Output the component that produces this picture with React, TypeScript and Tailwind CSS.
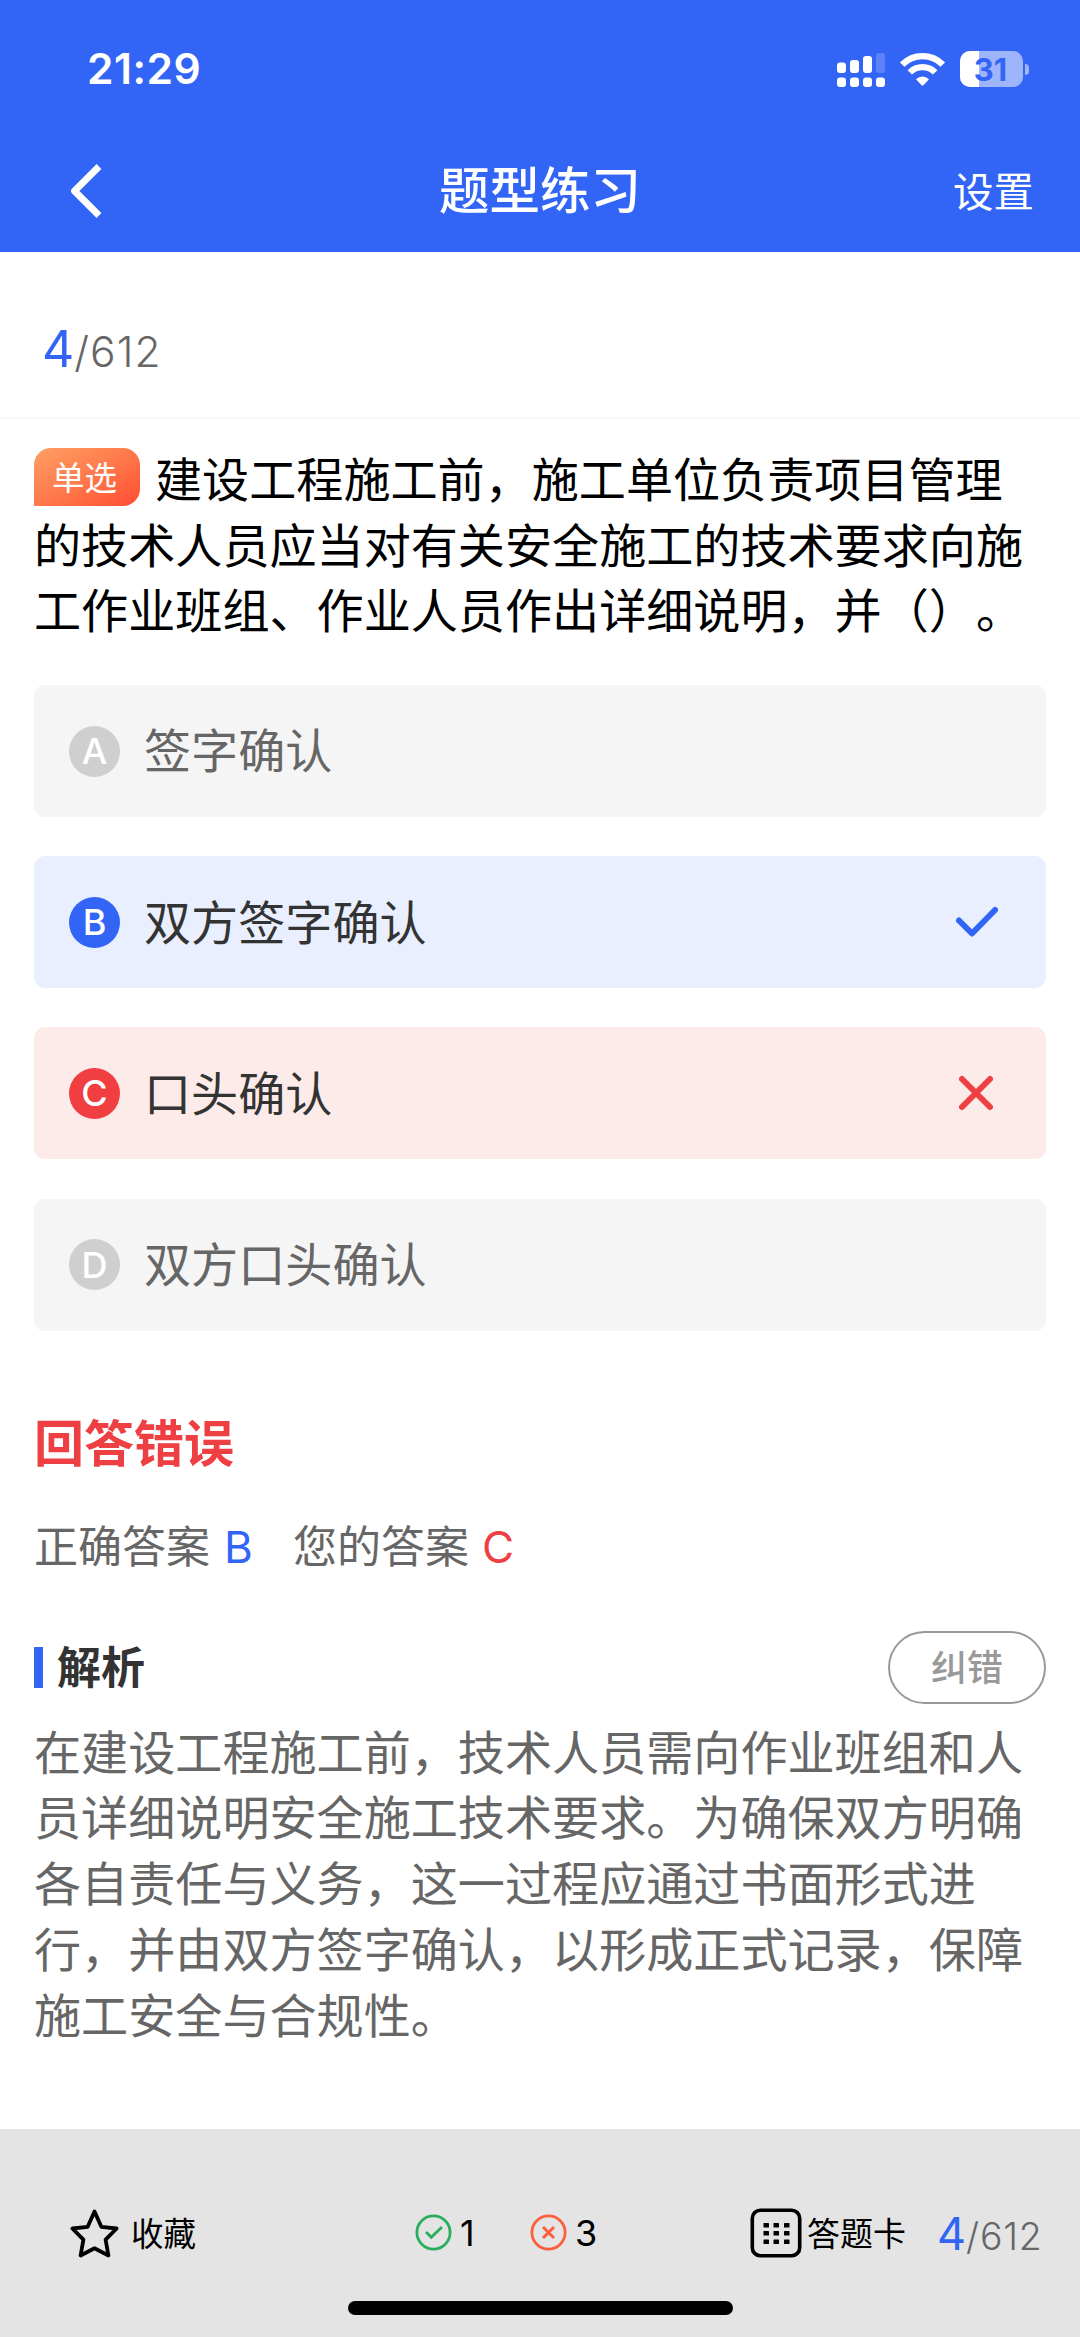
import React from "react";

const cjk = "font-['Noto_Sans_CJK_SC',sans-serif]";
const latin = "font-['Inter','Noto_Sans_CJK_SC',sans-serif]";

function StatusBar() {
  return (
    <div className="flex h-[138px] items-center justify-between pl-[87px] pr-[51px]">
      <span className={`${latin} text-[42.5px] font-semibold leading-none tracking-[0.5px]`}>21:29</span>
      <div className="flex items-center">
        <svg width="48" height="35" viewBox="0 0 48 35" fill="#fff">
          <rect x="0" y="10.5" width="9" height="10.5" rx="3" />
          <rect x="13" y="8" width="9" height="13" rx="3" />
          <rect x="26" y="4" width="9" height="17" rx="3" />
          <rect x="39" y="1" width="9" height="20" rx="3" opacity="0.2" />
          <rect x="0" y="25.5" width="9" height="9.5" rx="3" />
          <rect x="13" y="25.5" width="9" height="9.5" rx="3" />
          <rect x="26" y="25.5" width="9" height="9.5" rx="3" />
          <rect x="39" y="25.5" width="9" height="9.5" rx="3" />
        </svg>
        <svg className="ml-[15px]" width="45" height="34" viewBox="0 0 45 34">
          <path d="M2.2 12.6a28.6 28.6 0 0 1 40.6 0" fill="none" stroke="#fff" strokeWidth="6.4" />
          <path d="M9.8 20.4a17.8 17.8 0 0 1 25.4 0" fill="none" stroke="#fff" strokeWidth="6.2" />
          <path d="M16 27.2a9.3 9.3 0 0 1 13 0L23.6 33q-1.1 1-2.2 0z" fill="#fff" />
        </svg>
        <div className="relative ml-[15px] flex h-[36px] w-[63px] items-center justify-center overflow-hidden rounded-[10px] bg-[#9fb5fb]">
          <div className="absolute inset-y-0 left-0 w-[19px] bg-white" />
          <span className={`${latin} relative -left-px text-[31px] font-bold leading-none text-[#3265f6]`}>31</span>
        </div>
        <div className="ml-[2px] h-[11px] w-[4px] rounded-r-full bg-[#9fb5fb]" />
      </div>
    </div>
  );
}

function Header() {
  return (
    <header className="flex h-[252px] flex-col bg-[#3265f6] text-white">
      <StatusBar />
      <div className="grid h-[106px] grid-cols-3 items-center pl-[70px] pr-[46px]">
        <svg width="32" height="54" viewBox="0 0 32 54" fill="none" stroke="#fff" strokeWidth="6.8" strokeLinejoin="round">
          <path d="M29 2.5 4.5 27 29 51.5" />
        </svg>
        <h1 className="-ml-6 whitespace-nowrap pb-[7px] text-center text-[50.5px] font-medium leading-none">题型练习</h1>
        <span className="pb-[2px] text-right text-[40.5px] leading-none">设置</span>
      </div>
    </header>
  );
}

type Option = { key: string; text: string; row: string; dot: string; mark?: "right" | "wrong" };

const options: Option[] = [
  { key: "A", text: "签字确认", row: "bg-[#f5f5f5] text-[#666]", dot: "bg-[#d0cfd0]" },
  { key: "B", text: "双方签字确认", row: "bg-[#e9effe] text-[#333]", dot: "bg-[#3265f6]", mark: "right" },
  { key: "C", text: "口头确认", row: "bg-[#fdebea] text-[#333]", dot: "bg-[#f13e40]", mark: "wrong" },
  { key: "D", text: "双方口头确认", row: "bg-[#f5f5f5] text-[#666]", dot: "bg-[#d0cfd0]" },
];

function OptionRow({ option }: { option: Option }) {
  return (
    <li className={`flex h-[132px] items-center rounded-[11px] pl-[35px] pr-[46px] ${option.row}`}>
      <span
        className={`${latin} flex size-[51px] items-center justify-center rounded-full text-[36px] font-medium leading-none text-white ${option.dot}`}
      >
        {option.key}
      </span>
      <span className="ml-[24px] flex-1 pb-[6px] text-[47.1px] leading-none">{option.text}</span>
      {option.mark === "right" && (
        <svg width="46" height="34" viewBox="0 0 46 34" fill="none" stroke="#3265f6" strokeWidth="6" strokeLinecap="round" strokeLinejoin="round">
          <path d="M5 15.5 18 28.5 41 5" />
        </svg>
      )}
      {option.mark === "wrong" && (
        <svg className="mb-[1px] mr-[4px]" width="40" height="40" viewBox="0 0 40 40" fill="none" stroke="#ee4042" strokeWidth="6" strokeLinecap="round">
          <path d="m6 6 28 28M34 6 6 34" />
        </svg>
      )}
    </li>
  );
}

function Footer() {
  return (
    <footer className="flex h-[208px] flex-col bg-[#e4e4e4] text-black">
      <div className="flex h-[172px] items-end">
        <div className="flex h-[136px] w-full items-center pl-[70px]">
          <svg width="49" height="50" viewBox="0 0 49 50" fill="none" stroke="#000" strokeWidth="3.8" strokeLinejoin="round">
            <path d="m24.5 3.5 6.8 15.3 15.3 1.7L35.6 31.6 38.4 47.5 24.5 40.3 10.6 47.5 13.4 31.6 2.4 20.5l15.3-1.7z" />
          </svg>
          <span className="ml-[12px] w-[65px] whitespace-nowrap pb-[2px] text-[32.5px] leading-none">收藏</span>
          <div className="ml-[219px] flex w-[115px] items-center">
            <svg className="mb-[1px]" width="37" height="37" viewBox="0 0 37 37" fill="none" stroke="#2aae5e" strokeWidth="2.8">
              <circle cx="18.5" cy="18.5" r="16.6" />
              <path d="m11 18 5.3 5.3L27 13" />
            </svg>
            <span className={`${latin} ml-[8px] text-[36px] leading-none`}>1</span>
          </div>
          <div className="flex w-[220px] items-center">
            <svg className="mb-[1px]" width="37" height="37" viewBox="0 0 37 37" fill="none" stroke="#fb5f3c" strokeWidth="2.8">
              <circle cx="18.5" cy="18.5" r="16.6" />
              <path d="m13 13 11 11M24 13 13 24" strokeWidth="3" />
            </svg>
            <span className={`${latin} ml-[8px] text-[36px] leading-none`}>3</span>
          </div>
          <svg width="52" height="50" viewBox="0 0 52 50" fill="#000">
            <rect x="2.3" y="2.3" width="47.4" height="45.4" rx="8" fill="none" stroke="#000" strokeWidth="3.6" />
            {[15, 23, 31.5].map((y) =>
              [13.5, 23.5, 34].map((x) => <rect key={`${x}-${y}`} x={x} y={y} width="5.5" height="4.6" rx="0.6" />),
            )}
          </svg>
          <span className="ml-[5px] w-[130px] whitespace-nowrap pb-[2px] text-[33px] leading-none">答题卡</span>
          <div className={`${latin} flex items-baseline font-light leading-none`}>
            <span className="text-[45px] font-[390] text-[#3265f6]">4</span>
            <span className="text-[37.5px] tracking-[0.8px] text-[#666]">/612</span>
          </div>
        </div>
      </div>
      <div className="mx-auto h-[14px] w-[385px] rounded-full bg-black" />
    </footer>
  );
}

export default function App() {
  return (
    <div className={`${cjk} flex h-[2337px] w-[1080px] flex-col overflow-hidden bg-white`} lang="zh-CN">
      <Header />
      <div className="flex h-[167px] items-center border-b-2 border-[#f7f7f7] pl-[42px] pt-[28px]">
        <div className={`${latin} flex items-baseline font-light leading-none`}>
          <span className="text-[50px] font-[390] text-[#3265f6]">4</span>
          <span className="text-[42.5px] font-[330] tracking-[1px] text-[#666]">/612</span>
        </div>
      </div>

      <main className="flex flex-1 flex-col px-[34px]">
        <p className="mt-[25px] h-[198px] whitespace-nowrap text-[47.1px] leading-[65.6px] text-black [text-spacing-trim:space-all]">
          <span className="mr-[15px] mt-[4px] inline-flex h-[58px] w-[106px] items-center justify-center rounded-[17px] rounded-bl-none bg-linear-to-br from-[#ff9f63] to-[#ff4a32] pb-[2px] pr-[5px] align-top text-[32.5px] leading-none text-white">
            单选
          </span>
          建设工程施工前，施工单位负责项目管理
          <br />
          的技术人员应当对有关安全施工的技术要求向施
          <br />
          工作业班组、作业人员作出详细说明，并（）。
        </p>

        <ul className="mt-[43px] flex flex-col gap-[39.2px]">
          {options.map((o) => (
            <OptionRow key={o.key} option={o} />
          ))}
        </ul>

        <h2 className="mt-[84px] text-[50px] font-bold leading-[50px] text-[#ee4042]">回答错误</h2>

        <div className="mt-[60px] flex h-[44px] items-center text-[44px] leading-none text-[#666]">
          <span className="pb-[6px]">正确答案</span>
          <span className={`${latin} ml-[14px] w-[69px] text-[#3265f6]`}>B</span>
          <span className="pb-[6px]">您的答案</span>
          <span className={`${latin} ml-[13px] font-[380] text-[#ee4042]`}>C</span>
        </div>

        <div className="mt-[62px] flex h-[73px] items-center">
          <div className="h-[41px] w-[9px] bg-[#3265f6]" />
          <h3 className="ml-[14px] flex-1 pb-[5px] text-[44px] font-bold leading-none text-[#333]">解析</h3>
          <button className="flex h-[73px] w-[158px] items-center justify-center rounded-full border-[2.5px] border-[#999] pb-[5px] text-[36px] font-medium leading-none text-[#999]">
            纠错
          </button>
        </div>

        <p className="mt-[13px] whitespace-nowrap text-[47.1px] leading-[65.8px] text-[#666] [text-spacing-trim:space-all]">
          在建设工程施工前，技术人员需向作业班组和人
          <br />
          员详细说明安全施工技术要求。为确保双方明确
          <br />
          各自责任与义务，这一过程应通过书面形式进
          <br />
          行，并由双方签字确认，以形成正式记录，保障
          <br />
          施工安全与合规性。
        </p>
      </main>

      <Footer />
    </div>
  );
}
